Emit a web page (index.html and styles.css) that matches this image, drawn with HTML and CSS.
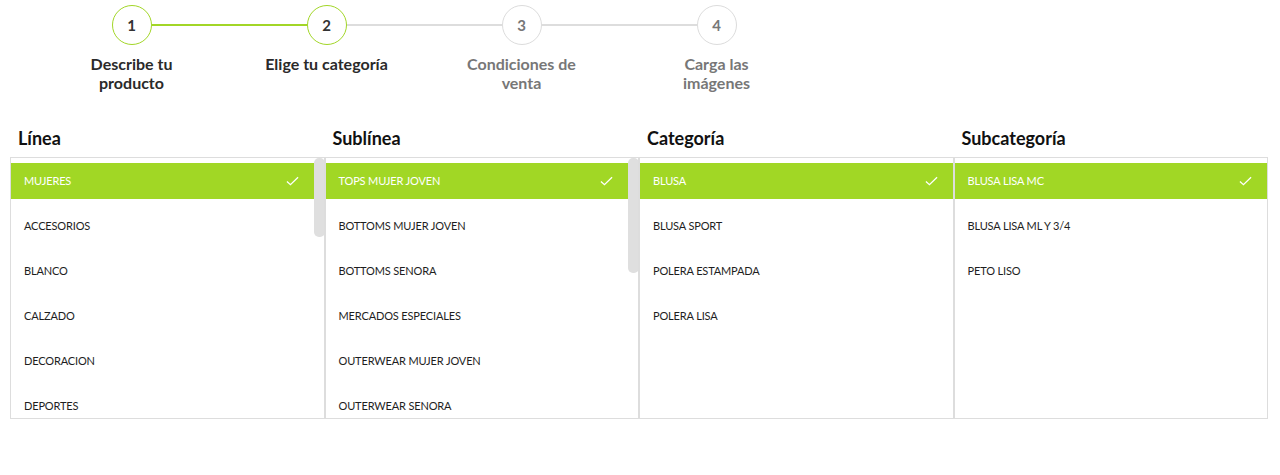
FILE: index.html
```html
<!DOCTYPE html>
<html lang="es">
<head>
<meta charset="utf-8">
<title>Elige tu categoría</title>
<link rel="stylesheet" href="styles.css">
</head>
<body>
<ol class="stepper">
  <li class="step done"><span class="circle">1</span><span class="label">Describe tu producto</span></li>
  <li class="step current"><span class="circle">2</span><span class="label">Elige tu categoría</span></li>
  <li class="step"><span class="circle">3</span><span class="label">Condiciones de venta</span></li>
  <li class="step last"><span class="circle">4</span><span class="label">Carga las imágenes</span></li>
</ol>

<div class="columns">
  <section class="col">
    <h3 class="col-title">Línea</h3>
    <div class="box scrollable">
      <ul class="list">
        <li class="item selected"><span>MUJERES</span><svg class="check" viewBox="0 0 14 10"><polyline points="1,5.5 4.8,9 13,1"/></svg></li>
        <li class="item"><span>ACCESORIOS</span></li>
        <li class="item"><span>BLANCO</span></li>
        <li class="item"><span>CALZADO</span></li>
        <li class="item"><span>DECORACION</span></li>
        <li class="item"><span>DEPORTES</span></li>
      </ul>
      <div class="thumb thumb-short"></div>
    </div>
  </section>
  <section class="col">
    <h3 class="col-title">Sublínea</h3>
    <div class="box scrollable">
      <ul class="list">
        <li class="item selected"><span>TOPS MUJER JOVEN</span><svg class="check" viewBox="0 0 14 10"><polyline points="1,5.5 4.8,9 13,1"/></svg></li>
        <li class="item"><span>BOTTOMS MUJER JOVEN</span></li>
        <li class="item"><span>BOTTOMS SENORA</span></li>
        <li class="item"><span>MERCADOS ESPECIALES</span></li>
        <li class="item"><span>OUTERWEAR MUJER JOVEN</span></li>
        <li class="item"><span>OUTERWEAR SENORA</span></li>
      </ul>
      <div class="thumb thumb-long"></div>
    </div>
  </section>
  <section class="col">
    <h3 class="col-title">Categoría</h3>
    <div class="box">
      <ul class="list">
        <li class="item selected"><span>BLUSA</span><svg class="check" viewBox="0 0 14 10"><polyline points="1,5.5 4.8,9 13,1"/></svg></li>
        <li class="item"><span>BLUSA SPORT</span></li>
        <li class="item"><span>POLERA ESTAMPADA</span></li>
        <li class="item"><span>POLERA LISA</span></li>
      </ul>
    </div>
  </section>
  <section class="col">
    <h3 class="col-title">Subcategoría</h3>
    <div class="box">
      <ul class="list">
        <li class="item selected"><span>BLUSA LISA MC</span><svg class="check" viewBox="0 0 14 10"><polyline points="1,5.5 4.8,9 13,1"/></svg></li>
        <li class="item"><span>BLUSA LISA ML Y 3/4</span></li>
        <li class="item"><span>PETO LISO</span></li>
      </ul>
    </div>
  </section>
</div>
</body>
</html>
```

FILE: styles.css
```css
* {
  box-sizing: border-box;
}

html, body {
  margin: 0;
  padding: 0;
  background: #fff;
}

body {
  font-family: Lato, "Open Sans", "Liberation Sans", sans-serif;
  color: #222;
}

/* ---------- Stepper ---------- */
.stepper {
  list-style: none;
  margin: 0;
  padding: 5px 0 0 34px;
  display: flex;
}

.step {
  position: relative;
  width: 195px;
  display: flex;
  flex-direction: column;
  align-items: center;
}

.step::after {
  content: "";
  position: absolute;
  top: 19px;
  left: calc(50% + 20px);
  width: 155px;
  height: 2px;
  background: #dddddd;
}

.step.done::after {
  background: #a2d627;
}

.step.last::after {
  display: none;
}

.circle {
  width: 40px;
  height: 40px;
  border-radius: 50%;
  border: 1px solid #dcdcdc;
  display: flex;
  align-items: center;
  justify-content: center;
  font-weight: 700;
  font-size: 15px;
  color: #777;
  background: #fff;
}

.step.done .circle,
.step.current .circle {
  border-color: #a2d627;
  color: #333;
}

.label {
  margin-top: 9px;
  max-width: 130px;
  text-align: center;
  font-size: 16px;
  line-height: 19px;
  font-weight: 700;
  color: #777;
}

.step.done .label,
.step.current .label {
  color: #2a2a2a;
}

/* ---------- Columns ---------- */
.columns {
  display: grid;
  grid-template-columns: repeat(4, 1fr);
  margin: 35px 12px 0 10px;
}

.col-title {
  margin: 0 0 8px;
  padding-left: 8px;
  font-size: 18px;
  line-height: 22px;
  font-weight: 700;
  color: #111;
}

.box {
  position: relative;
  border: 1px solid #dddddd;
  height: 262px;
  overflow: hidden;
}

.list {
  list-style: none;
  margin: 0;
  padding: 5px 0 0;
}

.scrollable .list {
  padding-right: 10px;
}

.thumb {
  position: absolute;
  top: 0;
  right: -1px;
  width: 11px;
  border-radius: 5px;
  background: #dfdfdf;
}

.thumb-short {
  height: 79px;
}

.thumb-long {
  height: 115px;
}

.item {
  height: 36px;
  margin-bottom: 9px;
  padding: 0 15px 1px 13px;
  display: flex;
  align-items: center;
  justify-content: space-between;
  font-size: 11px;
  letter-spacing: -0.15px;
  color: #1e1e1e;
}

.item.selected {
  background: #a1d725;
  color: #fff;
}

.check {
  width: 13px;
  height: 10px;
  fill: none;
  stroke: #fff;
  stroke-width: 1.4;
}
```
